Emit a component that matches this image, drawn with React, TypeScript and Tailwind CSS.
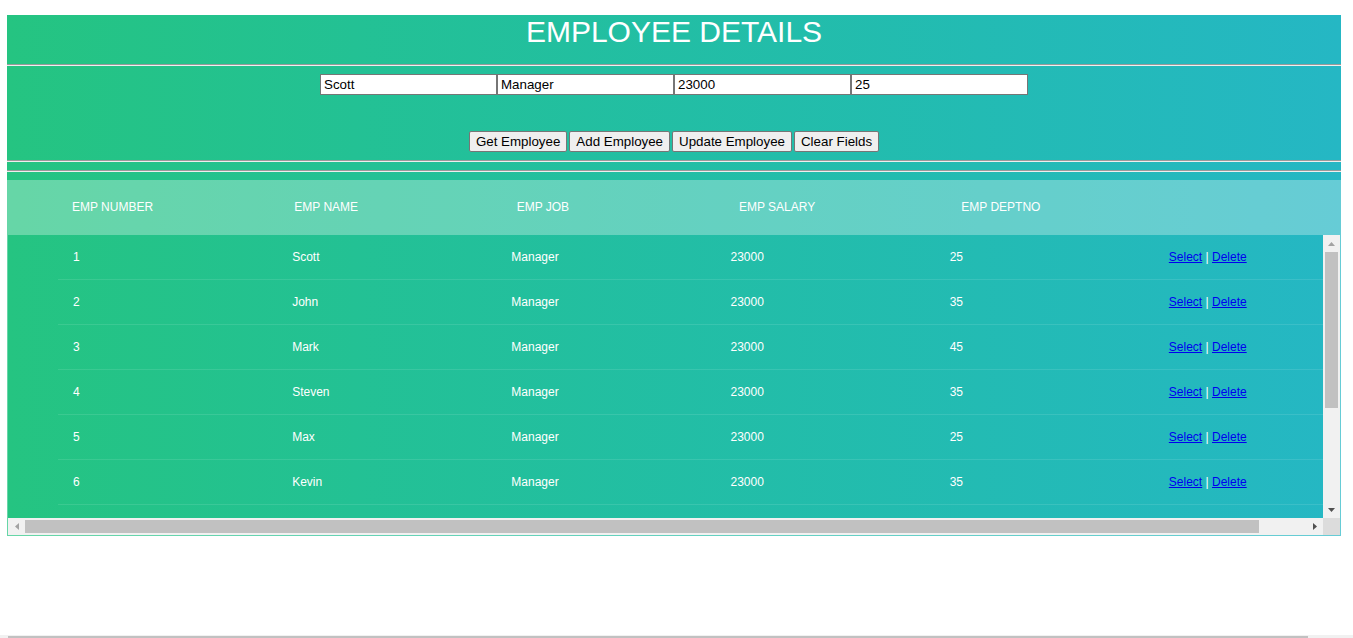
import React from "react";

const rows: [number, string, string, number, number][] = [
  [1, "Scott", "Manager", 23000, 25],
  [2, "John", "Manager", 23000, 35],
  [3, "Mark", "Manager", 23000, 45],
  [4, "Steven", "Manager", 23000, 35],
  [5, "Max", "Manager", 23000, 25],
  [6, "Kevin", "Manager", 23000, 35],
];

const headers = ["Emp Number", "Emp Name", "Emp Job", "Emp Salary", "Emp Deptno", ""];

function Hr() {
  return <div className="h-[2px] w-full border-t border-b border-t-[#9a9a9a] border-b-[#eeeeee]" />;
}

function Arrow({ dir, light }: { dir: "up" | "down" | "left" | "right"; light?: boolean }) {
  const fill = light ? "#a3a3a3" : "#505050";
  if (dir === "up")
    return (
      <svg width="7" height="4" viewBox="0 0 7 4">
        <polygon points="0,4 3.5,0 7,4" fill={fill} />
      </svg>
    );
  if (dir === "down")
    return (
      <svg width="7" height="4" viewBox="0 0 7 4">
        <polygon points="0,0 3.5,4 7,0" fill={fill} />
      </svg>
    );
  if (dir === "left")
    return (
      <svg width="4" height="7" viewBox="0 0 4 7">
        <polygon points="4,0 0,3.5 4,7" fill={fill} />
      </svg>
    );
  return (
    <svg width="4" height="7" viewBox="0 0 4 7">
      <polygon points="0,0 4,3.5 0,7" fill={fill} />
    </svg>
  );
}

export default function App() {
  const inputCls =
    "w-[177px] h-[21px] bg-white border border-[#767676] pl-[3px] pr-[2px] text-[13.33px] leading-[15px] text-black outline-none";
  const btnCls =
    "h-[21px] px-[6px] bg-[#efefef] border border-[#767676] rounded-[2px] text-[13.33px] leading-[15px] text-black";
  return (
    <div className="min-h-[638px] bg-white pt-[15px] pl-[7px] font-['Liberation_Sans',Arial,sans-serif]">
      <div className="w-[1334px] bg-gradient-to-r from-[#25c481] to-[#25b7c4]">
        <h1 className="h-[49px] text-[30px] leading-[32px] pt-[1px] text-center text-white font-normal">
          EMPLOYEE DETAILS
        </h1>
        <Hr />
        <div className="mt-[8px] flex justify-center">
          <input className={inputCls} defaultValue="Scott" />
          <input className={inputCls} defaultValue="Manager" />
          <input className={inputCls} defaultValue="23000" />
          <input className={inputCls} defaultValue="25" />
        </div>
        <div className="mt-[36px] flex justify-center gap-[2px]">
          <button className={btnCls}>Get Employee</button>
          <button className={btnCls}>Add Employee</button>
          <button className={btnCls}>Update Employee</button>
          <button className={btnCls}>Clear Fields</button>
        </div>
        <div className="mt-[8px]">
          <Hr />
        </div>
        <div className="mt-[8px]">
          <Hr />
        </div>
        <div className="mt-[8px] h-[54px] w-full bg-white/30 overflow-hidden flex">
          <div className="ml-[50px] w-[1334px] shrink-0 grid grid-cols-6">
            {headers.map((h, i) => (
              <div
                key={i}
                className="px-[15px] py-[20px] text-[12px] leading-[14px] uppercase text-white text-left"
              >
                {h}
              </div>
            ))}
          </div>
        </div>
        <div className="border border-white/30 flex flex-col">
          <div className="flex">
            <div className="w-[1315px] h-[283px] overflow-hidden">
              <div className="ml-[50px] w-[1315px]">
                {rows.map((r) => (
                  <div key={r[0]} className="grid grid-cols-6 border-b border-white/10">
                    {[r[0], r[1], r[2], r[3], r[4]].map((c, i) => (
                      <div key={i} className="px-[15px] py-[15px] text-[12px] leading-[14px] text-white">
                        {c}
                      </div>
                    ))}
                    <div className="px-[15px] py-[15px] text-[12px] leading-[14px] text-white whitespace-nowrap">
                      <a href="#" className="text-[#0000ee] underline">
                        Select
                      </a>{" "}
                      |{" "}
                      <a href="#" className="text-[#0000ee] underline">
                        Delete
                      </a>
                    </div>
                  </div>
                ))}
              </div>
            </div>
            <div className="w-[17px] h-[283px] bg-[#f1f1f1] flex flex-col">
              <div className="h-[17px] flex items-center justify-center">
                <Arrow dir="up" light />
              </div>
              <div className="flex-1">
                <div className="mx-[2px] h-[156px] bg-[#c1c1c1]" />
              </div>
              <div className="h-[17px] flex items-center justify-center">
                <Arrow dir="down" />
              </div>
            </div>
          </div>
          <div className="flex">
            <div className="w-[1315px] h-[17px] bg-[#f1f1f1] flex">
              <div className="w-[17px] flex items-center justify-center">
                <Arrow dir="left" light />
              </div>
              <div className="flex-1 flex items-center">
                <div className="w-[1234px] h-[13px] bg-[#c1c1c1]" />
              </div>
              <div className="w-[17px] flex items-center justify-center">
                <Arrow dir="right" />
              </div>
            </div>
            <div className="w-[17px] h-[17px] bg-[#dcdcdc]" />
          </div>
        </div>
      </div>
      <div className="fixed bottom-0 left-0 w-full h-[3px] bg-[#f1f1f1] pt-[1px]">
        <div className="ml-[8px] w-[1300px] h-[2px] bg-[#c1c1c1]" />
      </div>
    </div>
  );
}
